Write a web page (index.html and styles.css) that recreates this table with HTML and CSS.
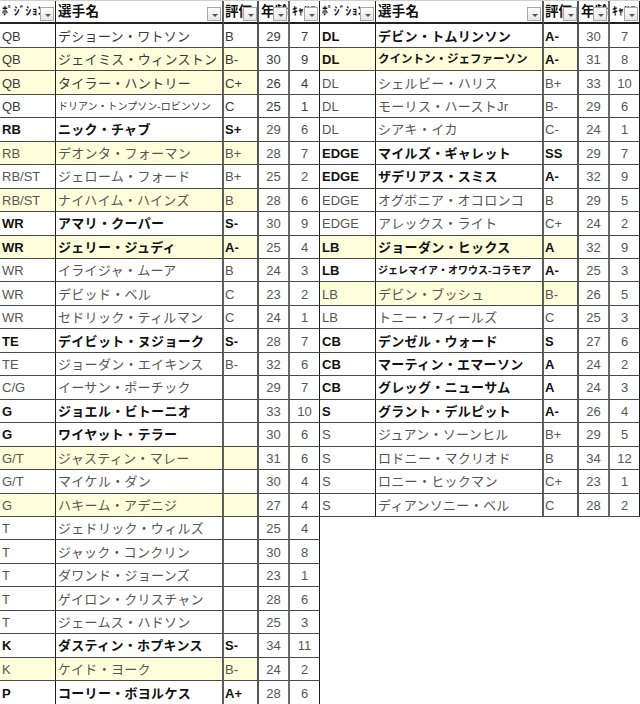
FILE: index.html
```html
<!DOCTYPE html>
<html lang="ja">
<head>
<meta charset="utf-8">
<link rel="stylesheet" href="styles.css">
</head>
<body>
<div class="sheet">
  <div class="tbl left">
    <div class="row hd">
      <div class="c pos"><span class="hk">ﾎﾟｼﾞｼｮﾝ</span><i class="dd"></i></div>
      <div class="c nm"><span class="hn">選手名</span><i class="dd"></i></div>
      <div class="c rt"><span class="hn">評価</span><i class="dd"></i></div>
      <div class="c ag"><span class="hn">年齢</span><i class="dd"></i></div>
      <div class="c cr"><span class="hk">ｷｬﾘｱ</span><i class="dd"></i></div>
    </div>
    <div class="row dk"><div class="c pos">QB</div><div class="c nm">デショーン・ワトソン</div><div class="c rt">B</div><div class="c ag">29</div><div class="c cr">7</div></div>
    <div class="row y dk"><div class="c pos">QB</div><div class="c nm">ジェイミス・ウィンストン</div><div class="c rt">B-</div><div class="c ag">30</div><div class="c cr">9</div></div>
    <div class="row y dk"><div class="c pos">QB</div><div class="c nm">タイラー・ハントリー</div><div class="c rt">C+</div><div class="c ag">26</div><div class="c cr">4</div></div>
    <div class="row dk"><div class="c pos">QB</div><div class="c nm s1">ドリアン・トンプソン-ロビンソン</div><div class="c rt">C</div><div class="c ag">25</div><div class="c cr">1</div></div>
    <div class="row b"><div class="c pos">RB</div><div class="c nm">ニック・チャブ</div><div class="c rt">S+</div><div class="c ag">29</div><div class="c cr">6</div></div>
    <div class="row y"><div class="c pos">RB</div><div class="c nm">デオンタ・フォーマン</div><div class="c rt">B+</div><div class="c ag">28</div><div class="c cr">7</div></div>
    <div class="row"><div class="c pos">RB/ST</div><div class="c nm">ジェローム・フォード</div><div class="c rt">B+</div><div class="c ag">25</div><div class="c cr">2</div></div>
    <div class="row y"><div class="c pos">RB/ST</div><div class="c nm">ナイハイム・ハインズ</div><div class="c rt">B</div><div class="c ag">28</div><div class="c cr">6</div></div>
    <div class="row b"><div class="c pos">WR</div><div class="c nm">アマリ・クーパー</div><div class="c rt">S-</div><div class="c ag">30</div><div class="c cr">9</div></div>
    <div class="row b y"><div class="c pos">WR</div><div class="c nm">ジェリー・ジュディ</div><div class="c rt">A-</div><div class="c ag">25</div><div class="c cr">4</div></div>
    <div class="row"><div class="c pos">WR</div><div class="c nm">イライジャ・ムーア</div><div class="c rt">B</div><div class="c ag">24</div><div class="c cr">3</div></div>
    <div class="row"><div class="c pos">WR</div><div class="c nm">デビッド・ベル</div><div class="c rt">C</div><div class="c ag">23</div><div class="c cr">2</div></div>
    <div class="row"><div class="c pos">WR</div><div class="c nm">セドリック・ティルマン</div><div class="c rt">C</div><div class="c ag">24</div><div class="c cr">1</div></div>
    <div class="row b"><div class="c pos">TE</div><div class="c nm">デイビット・ヌジョーク</div><div class="c rt">S-</div><div class="c ag">28</div><div class="c cr">7</div></div>
    <div class="row"><div class="c pos">TE</div><div class="c nm">ジョーダン・エイキンス</div><div class="c rt">B-</div><div class="c ag">32</div><div class="c cr">6</div></div>
    <div class="row"><div class="c pos">C/G</div><div class="c nm">イーサン・ポーチック</div><div class="c rt"></div><div class="c ag">29</div><div class="c cr">7</div></div>
    <div class="row b"><div class="c pos">G</div><div class="c nm">ジョエル・ビトーニオ</div><div class="c rt"></div><div class="c ag">33</div><div class="c cr">10</div></div>
    <div class="row b"><div class="c pos">G</div><div class="c nm">ワイヤット・テラー</div><div class="c rt"></div><div class="c ag">30</div><div class="c cr">6</div></div>
    <div class="row y"><div class="c pos">G/T</div><div class="c nm">ジャスティン・マレー</div><div class="c rt"></div><div class="c ag">31</div><div class="c cr">6</div></div>
    <div class="row"><div class="c pos">G/T</div><div class="c nm">マイケル・ダン</div><div class="c rt"></div><div class="c ag">30</div><div class="c cr">4</div></div>
    <div class="row y"><div class="c pos">G</div><div class="c nm">ハキーム・アデニジ</div><div class="c rt"></div><div class="c ag">27</div><div class="c cr">4</div></div>
    <div class="row"><div class="c pos">T</div><div class="c nm">ジェドリック・ウィルズ</div><div class="c rt"></div><div class="c ag">25</div><div class="c cr">4</div></div>
    <div class="row"><div class="c pos">T</div><div class="c nm">ジャック・コンクリン</div><div class="c rt"></div><div class="c ag">30</div><div class="c cr">8</div></div>
    <div class="row"><div class="c pos">T</div><div class="c nm">ダワンド・ジョーンズ</div><div class="c rt"></div><div class="c ag">23</div><div class="c cr">1</div></div>
    <div class="row"><div class="c pos">T</div><div class="c nm">ゲイロン・クリスチャン</div><div class="c rt"></div><div class="c ag">28</div><div class="c cr">6</div></div>
    <div class="row"><div class="c pos">T</div><div class="c nm">ジェームス・ハドソン</div><div class="c rt"></div><div class="c ag">25</div><div class="c cr">3</div></div>
    <div class="row b"><div class="c pos">K</div><div class="c nm">ダスティン・ホプキンス</div><div class="c rt">S-</div><div class="c ag">34</div><div class="c cr">11</div></div>
    <div class="row y"><div class="c pos">K</div><div class="c nm">ケイド・ヨーク</div><div class="c rt">B-</div><div class="c ag">24</div><div class="c cr">2</div></div>
    <div class="row b last"><div class="c pos">P</div><div class="c nm">コーリー・ボヨルケス</div><div class="c rt">A+</div><div class="c ag">28</div><div class="c cr">6</div></div>
  </div>
  <div class="tbl right">
    <div class="row hd">
      <div class="c pos"><span class="hk">ﾎﾟｼﾞｼｮﾝ</span><i class="dd"></i></div>
      <div class="c nm"><span class="hn">選手名</span><i class="dd"></i></div>
      <div class="c rt"><span class="hn">評価</span><i class="dd"></i></div>
      <div class="c ag"><span class="hn">年齢</span><i class="dd"></i></div>
      <div class="c cr"><span class="hk">ｷｬﾘｱ</span><i class="dd"></i></div>
    </div>
    <div class="row b"><div class="c pos">DL</div><div class="c nm">デビン・トムリンソン</div><div class="c rt">A-</div><div class="c ag">30</div><div class="c cr">7</div></div>
    <div class="row b y"><div class="c pos">DL</div><div class="c nm s2">クイントン・ジェファーソン</div><div class="c rt">A-</div><div class="c ag">31</div><div class="c cr">8</div></div>
    <div class="row"><div class="c pos">DL</div><div class="c nm">シェルビー・ハリス</div><div class="c rt">B+</div><div class="c ag">33</div><div class="c cr">10</div></div>
    <div class="row"><div class="c pos">DL</div><div class="c nm">モーリス・ハーストJr</div><div class="c rt">B-</div><div class="c ag">29</div><div class="c cr">6</div></div>
    <div class="row"><div class="c pos">DL</div><div class="c nm">シアキ・イカ</div><div class="c rt">C-</div><div class="c ag">24</div><div class="c cr">1</div></div>
    <div class="row b"><div class="c pos">EDGE</div><div class="c nm">マイルズ・ギャレット</div><div class="c rt">SS</div><div class="c ag">29</div><div class="c cr">7</div></div>
    <div class="row b"><div class="c pos">EDGE</div><div class="c nm">ザデリアス・スミス</div><div class="c rt">A-</div><div class="c ag">32</div><div class="c cr">9</div></div>
    <div class="row"><div class="c pos">EDGE</div><div class="c nm">オグボニア・オコロンコ</div><div class="c rt">B</div><div class="c ag">29</div><div class="c cr">5</div></div>
    <div class="row"><div class="c pos">EDGE</div><div class="c nm">アレックス・ライト</div><div class="c rt">C+</div><div class="c ag">24</div><div class="c cr">2</div></div>
    <div class="row b y"><div class="c pos">LB</div><div class="c nm">ジョーダン・ヒックス</div><div class="c rt">A</div><div class="c ag">32</div><div class="c cr">9</div></div>
    <div class="row b"><div class="c pos">LB</div><div class="c nm s1">ジェレマイア・オワウス-コラモア</div><div class="c rt">A-</div><div class="c ag">25</div><div class="c cr">3</div></div>
    <div class="row y"><div class="c pos">LB</div><div class="c nm">デビン・ブッシュ</div><div class="c rt">B-</div><div class="c ag">26</div><div class="c cr">5</div></div>
    <div class="row"><div class="c pos">LB</div><div class="c nm">トニー・フィールズ</div><div class="c rt">C</div><div class="c ag">25</div><div class="c cr">3</div></div>
    <div class="row b"><div class="c pos">CB</div><div class="c nm">デンゼル・ウォード</div><div class="c rt">S</div><div class="c ag">27</div><div class="c cr">6</div></div>
    <div class="row b"><div class="c pos">CB</div><div class="c nm">マーティン・エマーソン</div><div class="c rt">A</div><div class="c ag">24</div><div class="c cr">2</div></div>
    <div class="row b"><div class="c pos">CB</div><div class="c nm">グレッグ・ニューサム</div><div class="c rt">A</div><div class="c ag">24</div><div class="c cr">3</div></div>
    <div class="row b"><div class="c pos">S</div><div class="c nm">グラント・デルピット</div><div class="c rt">A-</div><div class="c ag">26</div><div class="c cr">4</div></div>
    <div class="row"><div class="c pos">S</div><div class="c nm">ジュアン・ソーンヒル</div><div class="c rt">B+</div><div class="c ag">29</div><div class="c cr">5</div></div>
    <div class="row"><div class="c pos">S</div><div class="c nm">ロドニー・マクリオド</div><div class="c rt">B</div><div class="c ag">34</div><div class="c cr">12</div></div>
    <div class="row"><div class="c pos">S</div><div class="c nm">ロニー・ヒックマン</div><div class="c rt">C+</div><div class="c ag">23</div><div class="c cr">1</div></div>
    <div class="row"><div class="c pos">S</div><div class="c nm">ディアンソニー・ベル</div><div class="c rt">C</div><div class="c ag">28</div><div class="c cr">2</div></div>
  </div>
</div>
</body>
</html>
```
FILE: styles.css
```css
html, body {
  margin: 0;
  padding: 0;
  background: #ffffff;
}
.sheet {
  display: flex;
  align-items: flex-start;
  width: 640px;
  height: 704px;
  overflow: hidden;
  font-family: "Liberation Sans", "Noto Sans CJK JP", sans-serif;
  font-size: 13px;
  color: #555555;
}
.tbl {
  display: grid;
  grid-template-columns: 56px 168px 35px 31px 30px;
  grid-auto-rows: calc(704px / 30);
  width: 320px;
  border-top: 1px solid #d0d0d0;
  box-sizing: border-box;
}
.row {
  display: contents;
}
.c {
  box-sizing: border-box;
  display: flex;
  align-items: center;
  white-space: nowrap;
  overflow: hidden;
  border-bottom: 1px solid #4a4a4a;
  background: #ffffff;
  line-height: 1;
  padding-top: 1px;
}
.pos {
  border-right: 1px solid #1e1e1e;
  padding-left: 2px;
}
.nm {
  border-right: 2px solid #5e5e5e;
  padding-left: 2px;
  letter-spacing: 0.3px;
}
.rt {
  border-right: 2px solid #555555;
  padding-left: 1px;
}
.ag {
  border-right: 2px solid #6a6a6a;
  justify-content: center;
}
.cr {
  border-right: 1px solid #1e1e1e;
  justify-content: center;
}
.row.dk .c {
  color: #3a3a3a;
}
.row.y .pos,
.row.y .nm,
.row.y .rt {
  background: #fefedb;
}
.row.b .pos,
.row.b .nm,
.row.b .rt {
  font-weight: bold;
  color: #111111;
}
.nm.s1 {
  font-size: 10px;
  letter-spacing: 0;
}
.nm.s2 {
  font-size: 11.5px;
  letter-spacing: 0;
}
.row.last .c {
  border-bottom: none;
}
.row.hd .c {
  position: relative;
  border-bottom: 2px solid #202020;
  align-items: center;
  color: #111111;
  padding-top: 0;
  padding-bottom: 2px;
}
.hk {
  font-family: "Noto Sans CJK JP", sans-serif;
  font-size: 11.5px;
  font-weight: bold;
  letter-spacing: 0.3px;
}
.hn {
  font-family: "Noto Sans CJK JP", sans-serif;
  font-size: 13.5px;
  font-weight: bold;
}
.ag .hn, .cr .hk {
  margin-right: auto;
  padding-left: 2px;
}
.dd {
  position: absolute;
  right: 1px;
  bottom: 1px;
  width: 14px;
  height: 14px;
  box-sizing: border-box;
  border: 1px solid #a8a8a8;
  background: linear-gradient(#fbfbfb, #e6e6e6);
}
.dd::after {
  content: "";
  position: absolute;
  left: 4px;
  top: 6px;
  border-left: 3px solid transparent;
  border-right: 3px solid transparent;
  border-top: 3px solid #555555;
}
.rt .dd { right: 0; }
```
